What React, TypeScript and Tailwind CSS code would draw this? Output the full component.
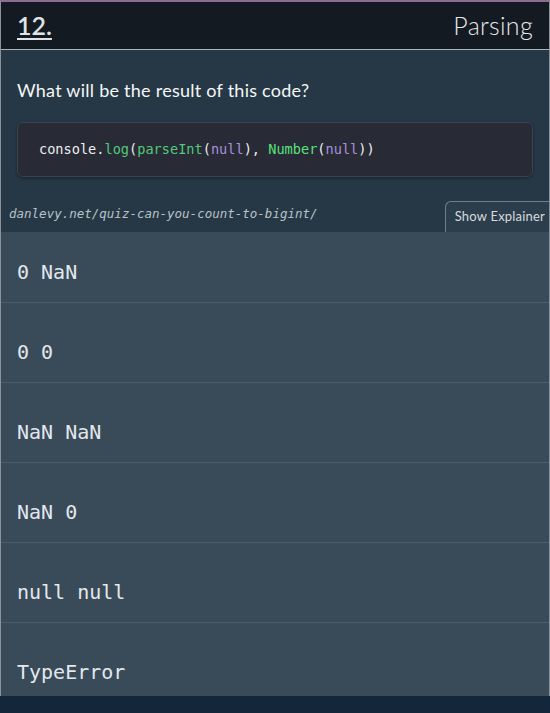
const answers = ["0 NaN", "0 0", "NaN NaN", "NaN 0", "null null", "TypeError"];

const mono = { fontFamily: '"DejaVu Sans Mono", monospace' };

export default function App() {
  return (
    <div className="flex h-[713px] w-[550px] flex-col overflow-hidden bg-[#13263a] font-['Lato',sans-serif]">
      <div className="flex flex-col border-x border-[#8b9399] border-t-2 border-t-[#8a6d90]">
        <header className="flex h-[47px] items-center justify-between bg-[#141a21] px-4">
          <span className="text-[25px] font-semibold text-[#dfe3e6] underline decoration-2 underline-offset-[3px]">
            12.
          </span>
          <span className="text-[25px] font-light tracking-[0.3px] text-[#e4e7ea]">Parsing</span>
        </header>

        <section className="border-t border-[#a9b2b8] bg-[#263845]">
          <p className="px-4 pt-[27px] text-[18px] tracking-[0.25px] text-[#f4f6f7]">
            What will be the result of this code?
          </p>
          <div
            className="mx-4 mt-[18px] flex h-[55px] items-center rounded-md border border-[#3b4250] bg-[#282a36] px-[21px] text-[13.6px] text-[#eceff1] shadow-[0_1px_3px_rgba(0,0,0,0.4)]"
            style={mono}
          >
            console.<span className="text-[#52c97a]">log</span>(
            <span className="text-[#52c97a]">parseInt</span>(
            <span className="text-[#a990dd]">null</span>),&nbsp;
            <span className="text-[#57e27a]">Number</span>(
            <span className="text-[#a990dd]">null</span>))
          </div>
          <div className="mt-[24px] flex items-end justify-between">
            <span
              className="mb-[8px] pl-2 text-[12.5px] italic text-[#b9c2c9]"
              style={mono}
            >
              danlevy.net/quiz-can-you-count-to-bigint/
            </span>
            <span className="flex h-[31px] items-center rounded-tl-md border-l border-t border-[#6e7e8a] bg-[#2c3e4c] pl-[9px] pr-1 text-[13px] tracking-[0.2px] text-[#d5dade]">
              Show Explainer
            </span>
          </div>
        </section>

        <ul className="bg-[#394a59] text-[20px] text-[#e3e8ec]" style={mono}>
          {answers.map((a, i) => (
            <li
              key={a}
              className={
                i === 0
                  ? "flex h-[70px] items-center px-4 pt-[10px]"
                  : i === answers.length - 1
                  ? "flex h-[74px] items-start border-t border-[#4a5c6a] px-4 pt-[34px]"
                  : "flex h-[80px] items-center border-t border-[#4a5c6a] px-4 pt-[18px]"
              }
            >
              {a}
            </li>
          ))}
        </ul>
      </div>
      <div className="flex-1 bg-[#13263a]" />
    </div>
  );
}
